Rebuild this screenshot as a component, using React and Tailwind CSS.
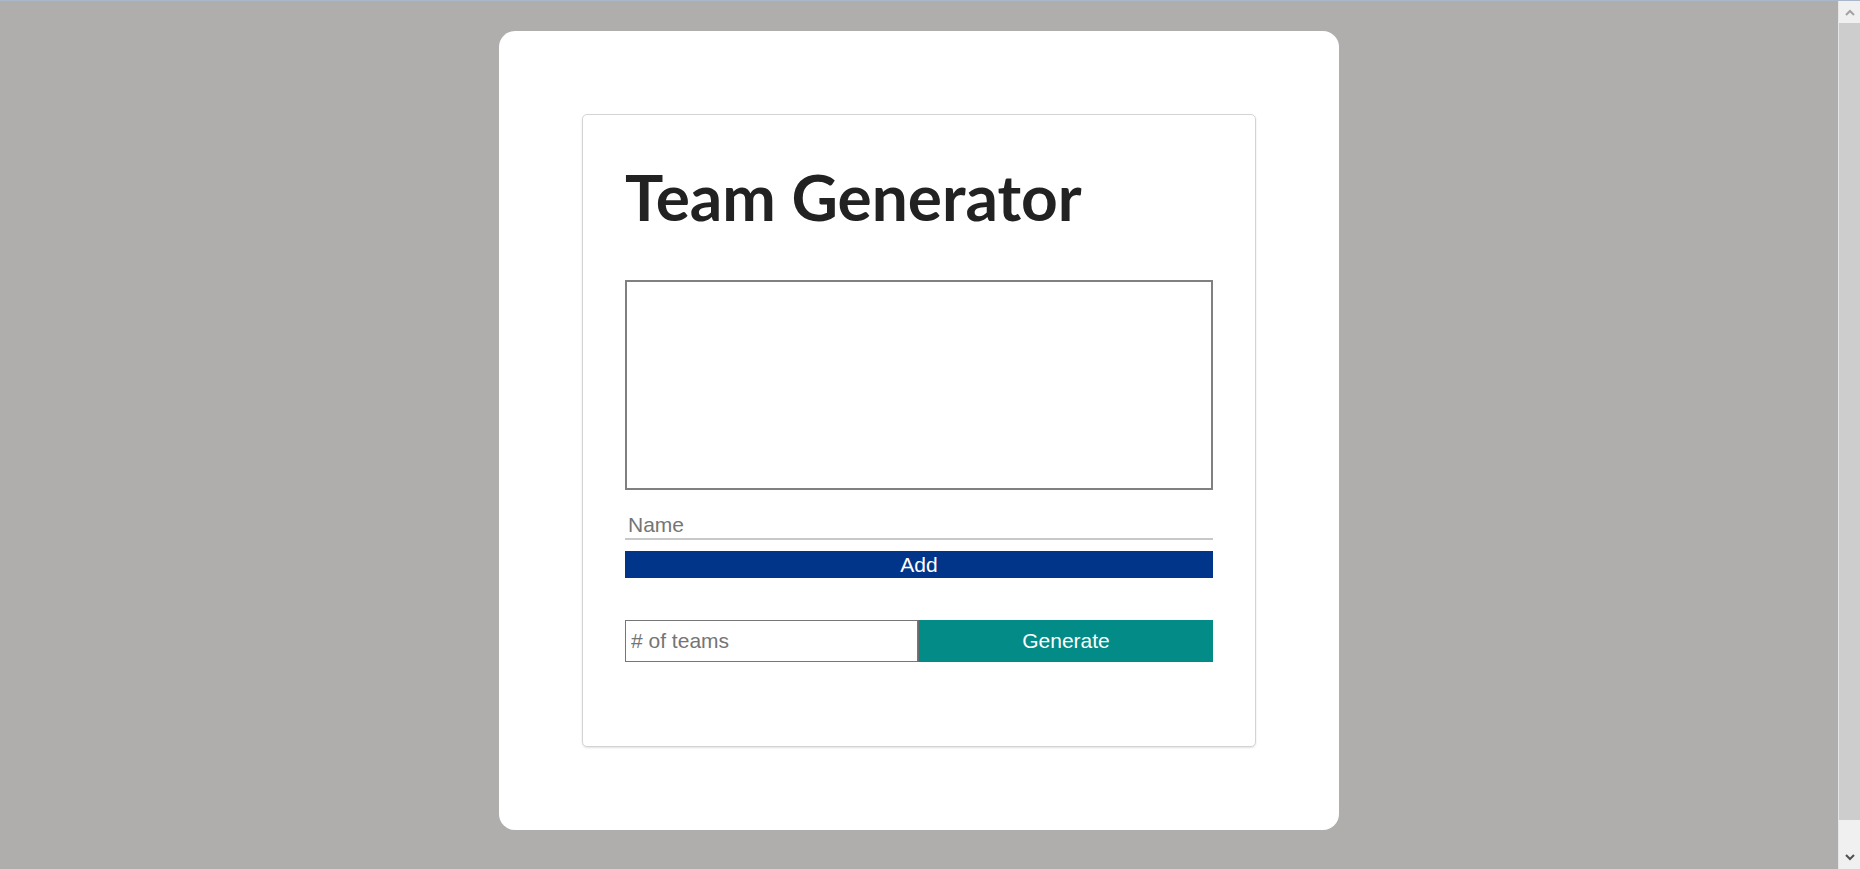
import React, { useState } from 'react';

const FakeScrollbar = () => {
  return (
    <div className="w-[22px] flex flex-col bg-[#f0f0f0] border-l border-[#e6e6e6]">
      <div className="h-[22px] flex items-center justify-center">
        <svg width="10" height="7" viewBox="0 0 10 7">
          <polyline points="1,6 5,2 9,6" fill="none" stroke="#a3a3a3" strokeWidth="2" />
        </svg>
      </div>
      <div className="h-[797px] bg-[#cdcdcd]" />
      <div className="flex-1" />
      <div className="h-[23px] flex items-center justify-center">
        <svg width="10" height="7" viewBox="0 0 10 7">
          <polyline points="1,1 5,5 9,1" fill="none" stroke="#505050" strokeWidth="2" />
        </svg>
      </div>
    </div>
  );
};

const App = () => {
  const [names, setNames] = useState('');
  const [name, setName] = useState('');
  const [teams, setTeams] = useState('');

  const handleAdd = () => {
    if (!name.trim()) return;
    setNames((prev) => (prev ? prev + '\n' + name.trim() : name.trim()));
    setName('');
  };

  return (
    <div className="h-[869px] flex flex-col overflow-hidden font-['Liberation_Sans',Arial,sans-serif]">
      <div className="h-px bg-[#a9b7ca]" />
      <div className="flex flex-1 min-h-0">
        <main className="flex-1 bg-[#afaeac] flex justify-center pt-[30px]">
          <div className="w-[840px] h-[799px] bg-white rounded-2xl p-[83px]">
            <div className="h-[633px] border border-[#d4d4d4] rounded-[5px] shadow-[0_1px_2px_rgba(0,0,0,0.12)] px-[42px] pt-[50px]">
              <h1 className="font-['Lato',sans-serif] font-bold text-[64px] leading-none text-[#222222]">
                Team Generator
              </h1>

              <textarea
                className="block mt-[51px] w-[588px] h-[210px] border-2 border-[#808080] resize-none outline-none p-1 text-base"
                value={names}
                onChange={(e) => setNames(e.target.value)}
              />

              <input
                className="block mt-[21px] w-full h-[29px] px-[3px] border-b-2 border-[#c8c8c8] text-[21px] text-[#222] outline-none placeholder:text-[#757575]"
                placeholder="Name"
                value={name}
                onChange={(e) => setName(e.target.value)}
              />
              <button
                className="block mt-[11px] w-full h-[27px] bg-[#01358a] text-white text-[21px] leading-[27px]"
                onClick={handleAdd}
              >
                Add
              </button>

              <div className="flex mt-[42px] h-[42px]">
                <input
                  className="w-[293px] h-full border border-[#767676] px-[5px] text-[21px] text-[#222] outline-none placeholder:text-[#757575]"
                  placeholder="# of teams"
                  value={teams}
                  onChange={(e) => setTeams(e.target.value)}
                />
                <button className="flex-1 h-full bg-[#028b87] border-l border-[#6c6c6c] text-white text-[21px]">
                  Generate
                </button>
              </div>
            </div>
          </div>
        </main>
        <FakeScrollbar />
      </div>
    </div>
  );
};

export default App;
